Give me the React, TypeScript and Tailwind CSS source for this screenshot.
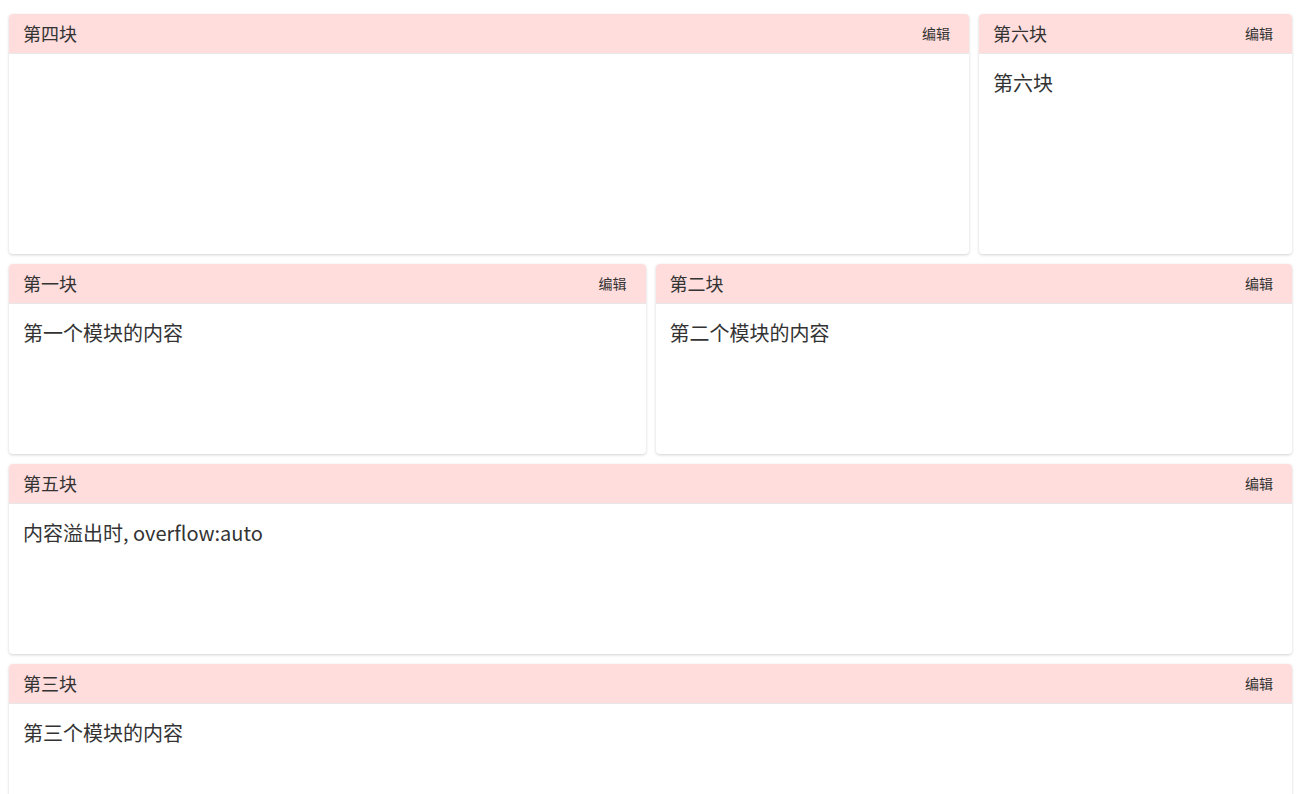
const font = { fontFamily: '"Microsoft YaHei", "Noto Sans CJK SC", "Noto Sans", sans-serif' };

interface PanelProps {
  title: string;
  content?: string;
  className?: string;
}

function Panel({ title, content, className = '' }: PanelProps) {
  return (
    <div
      className={`flex flex-col overflow-hidden rounded-[4px] bg-white shadow-[0_1px_3px_rgba(0,0,0,0.18)] ${className}`}
    >
      <div className="flex h-10 shrink-0 items-center justify-between border-b border-[#e8e8e8] bg-[#ffdddd] pr-[19px] pl-[14px]">
        <span className="text-[18px] text-[#333]">{title}</span>
        <span className="cursor-pointer text-[14px] text-[#333]">编辑</span>
      </div>
      <div className="flex-1 overflow-auto px-[14px] pt-[14px] text-[20px] leading-[30px] text-[#333]">
        {content}
      </div>
    </div>
  );
}

export default function App() {
  return (
    <div className="min-h-screen bg-white pt-[14px] pr-[6px] pl-[9px]" style={font}>
      <div className="flex flex-col gap-[10px]">
        <div className="flex gap-[10px]">
          <Panel title="第四块" className="h-[240px] w-[960px]" />
          <Panel title="第六块" content="第六块" className="h-[240px] flex-1" />
        </div>
        <div className="grid grid-cols-2 gap-[10px]">
          <Panel title="第一块" content="第一个模块的内容" className="h-[190px]" />
          <Panel title="第二块" content="第二个模块的内容" className="h-[190px]" />
        </div>
        <Panel title="第五块" content="内容溢出时, overflow:auto" className="h-[190px]" />
        <Panel title="第三块" content="第三个模块的内容" className="h-[190px]" />
      </div>
    </div>
  );
}
